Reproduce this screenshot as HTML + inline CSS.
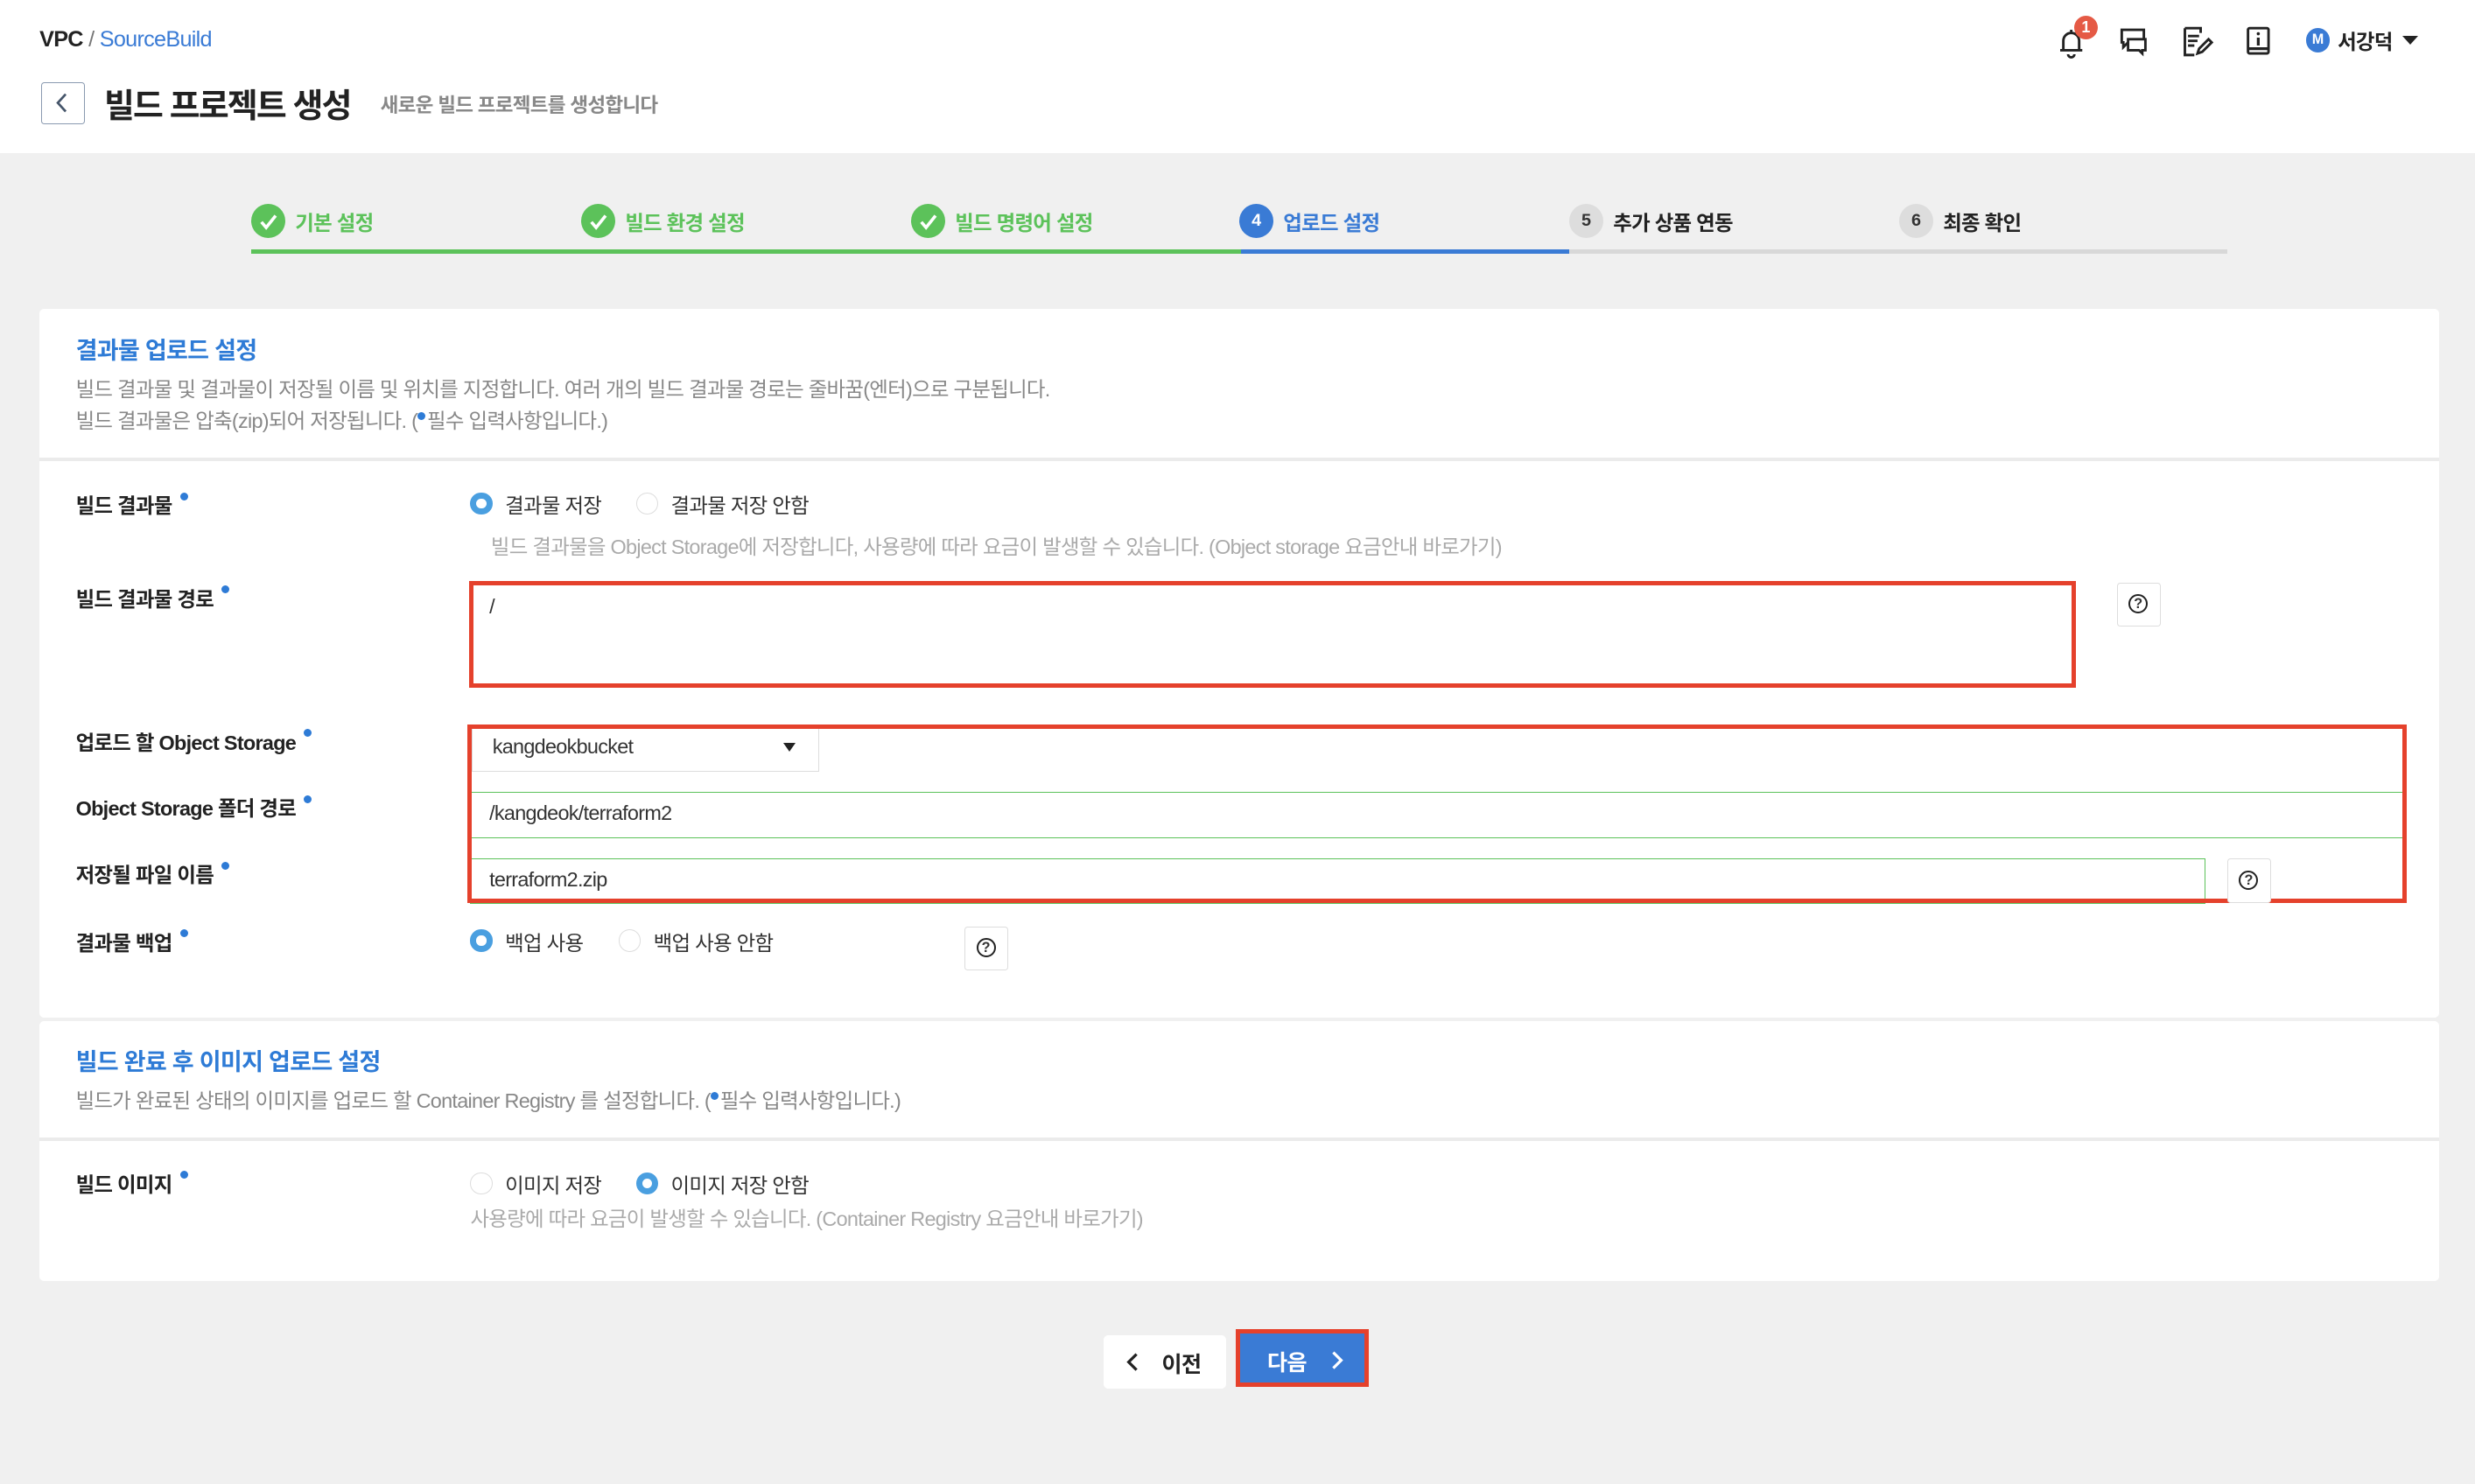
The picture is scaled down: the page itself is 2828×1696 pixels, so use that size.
<!DOCTYPE html>
<html><head><meta charset="utf-8"><style>
*{box-sizing:border-box;margin:0;padding:0}
html,body{width:2828px;height:1696px;overflow:hidden;background:#f0f0f0}
#w{zoom:1.80357;width:1568px;height:940px;position:relative;font-family:"Liberation Sans","Noto Sans CJK KR",sans-serif;color:#333;letter-spacing:-0.4px}
.a{position:absolute;white-space:nowrap}
.hd{position:absolute;left:0;top:0;width:1568px;height:97px;background:#fff}
.lb{font-size:13px;font-weight:bold;color:#222}
.dot{display:inline-block;width:5px;height:5px;border-radius:50%;background:#2e7bd6;vertical-align:top;margin-left:5px;margin-top:2px}
.idot{display:inline-block;width:5px;height:5px;border-radius:50%;background:#2e7bd6;vertical-align:top;margin:5px 1px 0 0}
.rad{position:absolute;width:14px;height:14px;border-radius:50%;border:1px solid #ddd;background:#fff}
.rad.on{border:4px solid #4a9fe0}
.rt{font-size:13px;color:#333}
.hint{font-size:13px;color:#aaa}
.hb{position:absolute;width:28px;height:28px;border:1px solid #ddd;border-radius:2px;background:#fff}
.hb:after{content:"?";position:absolute;left:7px;top:7px;width:10px;height:10px;border:1.5px solid #222;border-radius:50%;font-size:9px;font-weight:bold;line-height:10px;text-align:center;letter-spacing:0}
.sc{position:absolute;width:22px;height:22px;border-radius:50%;text-align:center;line-height:22px;font-size:11px;font-weight:bold;letter-spacing:0}
.st{font-size:13px;font-weight:bold}
.card{position:absolute;background:#fff;border-radius:3px}
</style></head><body><div id="w">
<div class="hd"></div>
<div class="a" style="left:25px;top:17px;font-size:14px"><b style="color:#222">VPC</b> <span style="color:#777">/</span> <span style="color:#3a7bd5">SourceBuild</span></div>
<div class="a" style="left:26px;top:52px;width:28px;height:27px;border:1px solid #8a9ab0;border-radius:2px"><svg width="26" height="25" viewBox="0 0 26 25"><path d="M15 7l-5 5.5 5 5.5" fill="none" stroke="#45556a" stroke-width="1.5"/></svg></div>
<div class="a" style="left:66px;top:50px;font-size:21px;font-weight:bold;color:#222;letter-spacing:-1px">빌드 프로젝트 생성</div>
<div class="a" style="left:241px;top:57px;font-size:12.5px;font-weight:bold;color:#888">새로운 빌드 프로젝트를 생성합니다</div>
<svg class="a" style="left:1300px;top:14px" width="240" height="24" viewBox="0 0 240 24">
<path d="M5 18h14M7 18v-6a5 5 0 0 1 10 0v6M10 20.5a2 2 0 0 0 4 0M12 5v2" fill="none" stroke="#222" stroke-width="1.6"/>
<path d="M44 5h14v8h-10l-3 3v-3h-1z" fill="none" stroke="#222" stroke-width="1.6"/><path d="M48 11h11v7h-2v2l-2-2h-7z" fill="#fff" stroke="#222" stroke-width="1.6"/>
<path d="M84 4h10v3M84 4v17h6M86 9h7M86 12h6M86 15h4M92 20l1-3 6-6 2 2-6 6z" fill="none" stroke="#222" stroke-width="1.6"/>
<rect x="124" y="4" width="13" height="16" rx="1" fill="none" stroke="#222" stroke-width="1.6"/><path d="M124 17h13M130.5 10v5" stroke="#222" stroke-width="1.8"/><circle cx="130.5" cy="7.5" r="1" fill="#222"/>
</svg>
<div class="a" style="left:1314px;top:10px;width:15px;height:15px;border-radius:50%;background:#e55a45;color:#fff;font-size:10px;font-weight:bold;text-align:center;line-height:15px;letter-spacing:0">1</div>
<div class="a" style="left:1461px;top:18px;width:15px;height:15px;border-radius:50%;background:#3a7bd5;color:#fff;font-size:9px;font-weight:bold;text-align:center;line-height:15px;letter-spacing:0">M</div>
<div class="a" style="left:1481px;top:16px;font-size:13px;font-weight:bold;color:#222">서강덕</div>
<div class="a" style="left:1522px;top:23px;border:5px solid transparent;border-top:6px solid #222;border-bottom:0"></div>
<div class="a" style="left:159px;top:158px;width:627px;height:3px;background:#5cc25a"></div>
<div class="a" style="left:786px;top:158px;width:208px;height:3px;background:#3a7bd5"></div>
<div class="a" style="left:994px;top:158px;width:417px;height:3px;background:#d8d8d8"></div>
<div class="sc a" style="left:159px;top:129px;background:#5cc25a"><svg width="22" height="22"><path d="M6.5 11.5l3 3.5 6-7.5" fill="none" stroke="#fff" stroke-width="2"/></svg></div>
<div class="a st" style="left:187px;top:131px;color:#5cc25a">기본 설정</div>
<div class="sc a" style="left:368px;top:129px;background:#5cc25a"><svg width="22" height="22"><path d="M6.5 11.5l3 3.5 6-7.5" fill="none" stroke="#fff" stroke-width="2"/></svg></div>
<div class="a st" style="left:396px;top:131px;color:#5cc25a">빌드 환경 설정</div>
<div class="sc a" style="left:577px;top:129px;background:#5cc25a"><svg width="22" height="22"><path d="M6.5 11.5l3 3.5 6-7.5" fill="none" stroke="#fff" stroke-width="2"/></svg></div>
<div class="a st" style="left:605px;top:131px;color:#5cc25a">빌드 명령어 설정</div>
<div class="sc a" style="left:785px;top:129px;background:#3a7bd5;color:#fff">4</div>
<div class="a st" style="left:813px;top:131px;color:#3a7bd5">업로드 설정</div>
<div class="sc a" style="left:994px;top:129px;background:#ddd;color:#333">5</div>
<div class="a st" style="left:1022px;top:131px;color:#222">추가 상품 연동</div>
<div class="sc a" style="left:1203px;top:129px;background:#ddd;color:#333">6</div>
<div class="a st" style="left:1231px;top:131px;color:#222">최종 확인</div>
<div class="card" style="left:25px;top:196px;width:1520px;height:449px"></div>
<div class="a" style="left:25px;top:290px;width:1520px;height:2px;background:#ebebeb"></div>
<div class="a" style="left:48px;top:210px;font-size:15px;font-weight:bold;color:#2e7bd6">결과물 업로드 설정</div>
<div class="a hint" style="left:48px;top:236px;color:#888">빌드 결과물 및 결과물이 저장될 이름 및 위치를 지정합니다. 여러 개의 빌드 결과물 경로는 줄바꿈(엔터)으로 구분됩니다.</div>
<div class="a hint" style="left:48px;top:256px;color:#888">빌드 결과물은 압축(zip)되어 저장됩니다. (<span class="idot"></span>필수 입력사항입니다.)</div>
<div class="a lb" style="left:48px;top:310px">빌드 결과물<span class="dot"></span></div>
<div class="rad on" style="left:298px;top:312px"></div><div class="a rt" style="left:320px;top:310px">결과물 저장</div>
<div class="rad" style="left:403px;top:312px"></div><div class="a rt" style="left:425px;top:310px">결과물 저장 안함</div>
<div class="a hint" style="left:311px;top:336px">빌드 결과물을 Object Storage에 저장합니다, 사용량에 따라 요금이 발생할 수 있습니다. (Object storage 요금안내 바로가기)</div>
<div class="a lb" style="left:48px;top:369px">빌드 결과물 경로<span class="dot"></span></div>
<div class="a" style="left:297px;top:368px;width:1018px;height:68px;border:3px solid #e5412c"></div>
<div class="a rt" style="left:310px;top:377px">/</div>
<div class="hb" style="left:1341px;top:369px"></div>
<div class="a lb" style="left:48px;top:460px">업로드 할 Object Storage<span class="dot"></span></div>
<div class="a lb" style="left:48px;top:502px">Object Storage 폴더 경로<span class="dot"></span></div>
<div class="a lb" style="left:48px;top:544px">저장될 파일 이름<span class="dot"></span></div>
<div class="a" style="left:299px;top:461px;width:220px;height:28px;border:1px solid #ddd;background:#fff"></div>
<div class="a rt" style="left:312px;top:466px">kangdeokbucket</div>
<div class="a" style="left:496px;top:471px;border:4px solid transparent;border-top:6px solid #222;border-bottom:0"></div>
<div class="a" style="left:298px;top:502px;width:1225px;height:29px;border:1px solid #5cc25a"></div>
<div class="a rt" style="left:310px;top:508px">/kangdeok/terraform2</div>
<div class="a" style="left:298px;top:544px;width:1099px;height:29px;border:1px solid #5cc25a"></div>
<div class="a rt" style="left:310px;top:550px">terraform2.zip</div>
<div class="a" style="left:296px;top:459px;width:1229px;height:113px;border:3px solid #e5412c"></div>
<div class="hb" style="left:1411px;top:544px"></div>
<div class="a lb" style="left:48px;top:587px">결과물 백업<span class="dot"></span></div>
<div class="rad on" style="left:298px;top:589px"></div><div class="a rt" style="left:320px;top:587px">백업 사용</div>
<div class="rad" style="left:392px;top:589px"></div><div class="a rt" style="left:414px;top:587px">백업 사용 안함</div>
<div class="hb" style="left:611px;top:587px"></div>
<div class="card" style="left:25px;top:647px;width:1520px;height:165px"></div>
<div class="a" style="left:25px;top:721px;width:1520px;height:2px;background:#ebebeb"></div>
<div class="a" style="left:48px;top:661px;font-size:15px;font-weight:bold;color:#2e7bd6">빌드 완료 후 이미지 업로드 설정</div>
<div class="a hint" style="left:48px;top:687px;color:#888">빌드가 완료된 상태의 이미지를 업로드 할 Container Registry 를 설정합니다. (<span class="idot"></span>필수 입력사항입니다.)</div>
<div class="a lb" style="left:48px;top:740px">빌드 이미지<span class="dot"></span></div>
<div class="rad" style="left:298px;top:743px"></div><div class="a rt" style="left:320px;top:741px">이미지 저장</div>
<div class="rad on" style="left:403px;top:743px"></div><div class="a rt" style="left:425px;top:741px">이미지 저장 안함</div>
<div class="a hint" style="left:298px;top:762px">사용량에 따라 요금이 발생할 수 있습니다. (Container Registry 요금안내 바로가기)</div>
<div class="a" style="left:699px;top:846px;width:78px;height:34px;background:#fff;border-radius:3px"><svg class="a" style="left:14px;top:10px" width="10" height="14"><path d="M7 2l-5 5 5 5" fill="none" stroke="#222" stroke-width="1.8"/></svg><span class="a" style="left:37px;top:8px;font-size:14px;font-weight:bold;color:#222">이전</span></div>
<div class="a" style="left:783px;top:842px;width:84px;height:37px;background:#3a7bd5;border:3px solid #e5412c"><span class="a" style="left:17px;top:8px;font-size:14px;font-weight:bold;color:#fff">다음</span><svg class="a" style="left:56px;top:10px" width="10" height="14"><path d="M3 2l5 5-5 5" fill="none" stroke="#fff" stroke-width="1.8"/></svg></div>
</div></body></html>
